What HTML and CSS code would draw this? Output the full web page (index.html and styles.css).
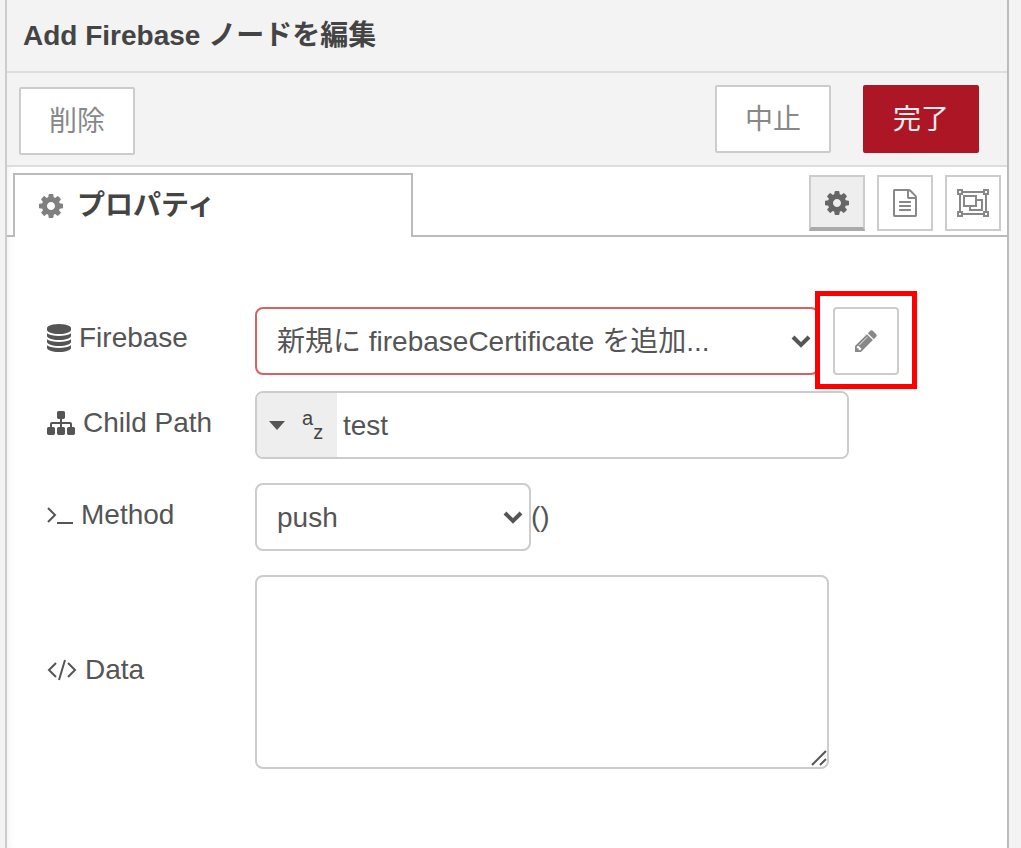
FILE: index.html
```html
<!DOCTYPE html>
<html lang="ja">

<head>
    <meta charset="utf-8">
    <title>Add Firebase ノードを編集</title>
    <link rel="stylesheet" href="styles.css">
</head>

<body>
    <!-- Shared icons -->
    <svg class="icon-defs" aria-hidden="true">
        <symbol id="icon-cog" viewBox="0 128 1536 1536">
            <path d="M1024 896q0-106-75-181t-181-75-181 75-75 181 75 181 181 75 181-75 75-181zm512-109v222q0 12-8 23t-20 13l-185 28q-19 54-39 91 35 50 107 138 10 12 10 25t-9 23q-27 37-99 108t-94 71q-12 0-26-9l-138-108q-44 23-91 38-16 136-29 186-7 28-36 28h-222q-14 0-24.500-8.500t-11.500-21.500l-28-184q-49-16-90-37l-141 107q-10 9-25 9-14 0-25-11-126-114-165-168-7-10-7-23 0-12 8-23 15-21 51-66.500t54-70.500q-27-50-41-99l-183-27q-13-2-21-12.500t-8-23.500v-222q0-12 8-23t19-13l186-28q14-46 39-92-40-57-107-138-10-12-10-24 0-10 9-23 26-36 98.500-107.500t94.500-71.500q13 0 26 10l138 107q44-23 91-38 16-136 29-186 7-28 36-28h222q14 0 24.500 8.500t11.500 21.500l28 184q49 16 90 37l142-107q9-9 24-9 13 0 25 10 129 119 165 170 7 8 7 22 0 12-8 23-15 21-51 66.500t-54 70.500q26 50 41 98l183 28q13 2 21 12.500t8 23.500z" fill-rule="evenodd" />
        </symbol>
        <symbol id="icon-chevron" viewBox="0 0 20 14">
            <path d="M2 3l8 8 8-8" fill="none" stroke="currentColor" stroke-width="4" />
        </symbol>
    </svg>

    <div class="tray">
        <header class="tray-header">
            <h1>Add Firebase ノードを編集</h1>
        </header>

        <!-- Delete / cancel / done -->
        <div class="tray-toolbar">
            <button type="button" class="btn btn-delete">削除</button>
            <button type="button" class="btn btn-cancel">中止</button>
            <button type="button" class="btn btn-primary">完了</button>
        </div>

        <!-- Tabs -->
        <div class="tabs">
            <a class="tab" href="#properties">
                <svg class="icon-24"><use href="#icon-cog" /></svg>
                <span>プロパティ</span>
            </a>
            <div class="tab-buttons">
                <button type="button" class="tab-button active" aria-label="プロパティ">
                    <svg class="icon-24"><use href="#icon-cog" /></svg>
                </button>
                <button type="button" class="tab-button" aria-label="説明">
                    <svg class="icon-file" viewBox="128 0 1536 1792">
                        <path d="M1596 380q28 28 48 76t20 88v1152q0 40-28 68t-68 28h-1344q-40 0-68-28t-28-68v-1600q0-40 28-68t68-28h896q40 0 88 20t76 48zm-444-244v376h376q-10-29-22-41l-313-313q-12-12-41-22zm384 1528v-1024h-416q-40 0-68-28t-28-68v-416h-768v1536h1280zm-1024-864q0-14 9-23t23-9h704q14 0 23 9t9 23v64q0 14-9 23t-23 9h-704q-14 0-23-9t-9-23v-64zm736 224q14 0 23 9t9 23v64q0 14-9 23t-23 9h-704q-14 0-23-9t-9-23v-64q0-14 9-23t23-9h704zm0 256q14 0 23 9t9 23v64q0 14-9 23t-23 9h-704q-14 0-23-9t-9-23v-64q0-14 9-23t23-9h704z" />
                    </svg>
                </button>
                <button type="button" class="tab-button" aria-label="外観">
                    <svg class="icon-group" viewBox="0 0 32 28">
                        <g fill="none" stroke="currentColor" stroke-width="2">
                            <path d="M6 3h20M6 25h20M3 6v16M29 6v16" />
                            <path d="M1 1h4v4h-4zM27 1h4v4h-4zM1 23h4v4h-4zM27 23h4v4h-4z" />
                            <path d="M7 7h12v10h-12z" />
                            <path d="M19 11h6v10h-12v-4" />
                        </g>
                    </svg>
                </button>
            </div>
        </div>

        <!-- Node properties form -->
        <form class="node-form">
            <div class="form-row row-firebase">
                <label for="firebase">
                    <svg class="icon-database" viewBox="128 0 1536 1792">
                        <path d="M896 768q237 0 443-43t325-127v170q0 69-103 128t-280 93.500-385 34.500-385-34.500-280-93.500-103-128v-170q119 84 325 127t443 43zm0 768q237 0 443-43t325-127v170q0 69-103 128t-280 93.500-385 34.500-385-34.500-280-93.500-103-128v-170q119 84 325 127t443 43zm0-384q237 0 443-43t325-127v170q0 69-103 128t-280 93.500-385 34.500-385-34.500-280-93.500-103-128v-170q119 84 325 127t443 43zm0-1152q208 0 385 34.500t280 93.500 103 128v128q0 69-103 128t-280 93.500-385 34.500-385-34.500-280-93.500-103-128v-128q0-69 103-128t280-93.500 385-34.500z" />
                    </svg>
                    Firebase
                </label>
                <div class="select-wrap select-firebase">
                    <select id="firebase" class="input-error">
                        <option>新規に firebaseCertificate を追加...</option>
                    </select>
                    <svg class="chevron"><use href="#icon-chevron" /></svg>
                </div>
                <div class="highlight">
                    <button type="button" class="btn-edit" aria-label="編集">
                        <svg class="icon-pencil" viewBox="128 128 1536 1536">
                            <path d="M491 1536l91-91-235-235-91 91v107h128v128h107zm523-928q0-22-22-22-10 0-17 7l-542 542q-7 7-7 17 0 22 22 22 10 0 17-7l542-542q7-7 7-17zm-54-192l416 416-832 832h-416v-416zm683 96q0 53-37 90l-166 166-416-416 166-165q36-38 90-38 53 0 91 38l235 234q37 39 37 91z" />
                        </svg>
                    </button>
                </div>
            </div>

            <div class="form-row">
                <label for="child-path">
                    <svg class="icon-sitemap" viewBox="0 128 1792 1536">
                        <path d="M1792 1248v320q0 40-28 68t-68 28h-320q-40 0-68-28t-28-68v-320q0-40 28-68t68-28h96v-192h-512v192h96q40 0 68 28t28 68v320q0 40-28 68t-68 28h-320q-40 0-68-28t-28-68v-320q0-40 28-68t68-28h96v-192h-512v192h96q40 0 68 28t28 68v320q0 40-28 68t-68 28h-320q-40 0-68-28t-28-68v-320q0-40 28-68t68-28h96v-192q0-52 38-90t90-38h512v-192h-96q-40 0-68-28t-28-68v-320q0-40 28-68t68-28h320q40 0 68 28t28 68v320q0 40-28 68t-68 28h-96v192h512q52 0 90 38t38 90v192h96q40 0 68 28t28 68z" />
                    </svg>
                    Child Path
                </label>
                <div class="typed-input">
                    <button type="button" class="type-select" aria-label="文字列">
                        <svg class="caret" viewBox="0 0 16 9"><path d="M0 0h16l-8 9z" /></svg>
                        <span class="type-az"><span>a</span><span class="type-z">z</span></span>
                    </button>
                    <input type="text" id="child-path" value="test">
                </div>
            </div>

            <div class="form-row">
                <label for="method">
                    <svg class="icon-terminal" viewBox="0 0 26 20">
                        <path d="M1 3l7 7-7 7M10 18h16" fill="none" stroke="currentColor" stroke-width="2" />
                    </svg>
                    Method
                </label>
                <div class="select-wrap select-method">
                    <select id="method">
                        <option>push</option>
                    </select>
                    <svg class="chevron"><use href="#icon-chevron" /></svg>
                </div>
                <span class="method-args">()</span>
            </div>

            <div class="form-row">
                <label for="data">
                    <svg class="icon-code" viewBox="0 0 30 22">
                        <path d="M9 4l-7 7 7 7M21 4l7 7-7 7M18 1l-6 20" fill="none" stroke="currentColor" stroke-width="2" />
                    </svg>
                    Data
                </label>
                <div class="textarea-wrap">
                    <textarea id="data"></textarea>
                    <svg class="resizer" viewBox="0 0 16 16">
                        <path d="M1 15l14-14M9 15l6-6" fill="none" stroke="currentColor" stroke-width="2" />
                    </svg>
                </div>
            </div>
        </form>
    </div>
</body>

</html>
```

FILE: styles.css
```css
* {
    box-sizing: border-box;
}
body {
    margin: 0;
    padding: 0 12px 0 5px;
    background-color: #f3f3f3;
    color: #555;
    font-family: "Liberation Sans", "Noto Sans CJK JP", sans-serif;
    font-size: 28px;
    line-height: 40px;
}
button,
input,
select,
textarea {
    margin: 0;
    color: inherit;
    font: inherit;
}
svg {
    display: block;
    flex: none;
    fill: currentColor;
}
.icon-defs {
    position: absolute;
    width: 0;
    height: 0;
}
.tray {
    min-height: 100vh;
    border-left: 2px solid #ccc;
    border-right: 2px solid #bbb;
    background-color: #fff;
    box-shadow: inset 6px 0 8px -6px rgba(0, 0, 0, 0.08);
}

/* Header and toolbar */
.tray-header {
    padding: 16px 16px 15px;
    border-bottom: 2px solid #ddd;
    background-color: #f3f3f3;
}
.tray-header h1 {
    margin: 0;
    color: #444;
    font-size: 28px;
    font-weight: bold;
}
.tray-toolbar {
    display: flex;
    align-items: flex-start;
    padding: 12px 28px 10px 12px;
    border-bottom: 2px solid #ddd;
    background-color: #f3f3f3;
}
.btn {
    width: 116px;
    height: 68px;
    padding: 2px 0 0;
    border: 2px solid #ccc;
    border-radius: 2px;
    background-color: #fff;
    color: #888;
}
.btn-delete {
    margin-top: 2px;
}
.btn-cancel {
    margin-left: auto;
}
.btn-primary {
    margin-left: 32px;
    border-color: #ad1625;
    background-color: #ad1625;
    color: #eee;
}

/* Tabs */
.tabs {
    display: flex;
    justify-content: space-between;
    height: 70px;
    padding: 6px 6px 0;
    border-bottom: 2px solid #bbb;
}
.tab {
    display: flex;
    align-items: center;
    gap: 14px;
    width: 400px;
    height: 64px;
    padding: 0 24px;
    border: 2px solid #bbb;
    border-bottom: 0;
    background-color: #fff;
    color: #444;
    font-weight: bold;
    text-decoration: none;
}
.tab svg {
    color: #808080;
}
.tab-buttons {
    display: flex;
    gap: 12px;
    padding-top: 2px;
}
.tab-button {
    display: flex;
    align-items: center;
    justify-content: center;
    width: 56px;
    height: 56px;
    padding: 0;
    border: 2px solid #ccc;
    background-color: #fff;
    color: #888;
}
.tab-button.active {
    padding-top: 2px;
    border-bottom: 4px solid #aaa;
    background-color: #eee;
    color: #666;
}

/* Form */
.node-form {
    padding: 70px 40px 40px;
}
.form-row {
    display: flex;
    align-items: center;
    margin-bottom: 24px;
}
.form-row label {
    display: flex;
    flex: none;
    align-items: center;
    gap: 8px;
    width: 208px;
    padding-bottom: 4px;
}
.row-firebase {
    margin-bottom: 16px;
}
.row-firebase label {
    padding-bottom: 6px;
}
.select-wrap {
    position: relative;
}
.select-firebase {
    flex: 0 1 564px;
}
.select-method {
    flex: 0 1 276px;
}
select {
    width: 100%;
    height: 68px;
    padding: 2px 40px 0 20px;
    border: 2px solid #ccc;
    border-radius: 8px;
    background-color: #fff;
    appearance: none;
}
select.input-error {
    border-color: #d6615f;
}
.chevron {
    position: absolute;
    top: 27px;
    right: 8px;
    width: 20px;
    height: 14px;
    pointer-events: none;
}

/* Red frame around the edit button */
.highlight {
    position: relative;
    margin-left: 14px;
}
.highlight::before {
    content: "";
    position: absolute;
    inset: -16px -18px -14px;
    border: 5px solid #f00;
    pointer-events: none;
}
.btn-edit {
    display: flex;
    align-items: center;
    justify-content: center;
    width: 66px;
    height: 68px;
    padding: 0;
    border: 2px solid #ccc;
    border-radius: 4px;
    background-color: #fff;
    color: #888;
}

.typed-input {
    display: flex;
    flex: 0 1 594px;
    height: 68px;
    border: 2px solid #ccc;
    border-radius: 8px;
    overflow: hidden;
}
.type-select {
    display: flex;
    flex: none;
    align-items: center;
    gap: 17px;
    width: 80px;
    padding: 0 12px;
    border: 0;
    background-color: #eee;
}
.type-az {
    display: flex;
    color: #444;
    font-size: 20px;
    line-height: 24px;
}
.type-z {
    margin-top: 14px;
}
.typed-input input {
    flex: 1;
    min-width: 0;
    padding: 2px 6px 0;
    border: 0;
    background-color: #fff;
}
.textarea-wrap {
    position: relative;
    flex: 0 1 574px;
}
textarea {
    display: block;
    width: 100%;
    height: 194px;
    padding: 8px 12px;
    border: 2px solid #ccc;
    border-radius: 8px;
    background-color: #fff;
    resize: none;
}
.resizer {
    position: absolute;
    right: 2px;
    bottom: 3px;
    width: 16px;
    height: 16px;
    pointer-events: none;
}

/* Icon sizes */
.icon-24 {
    width: 24px;
    height: 24px;
}
.icon-pencil {
    width: 22px;
    height: 22px;
}
.icon-file,
.icon-database {
    width: 24px;
    height: 28px;
}
.icon-group {
    width: 32px;
    height: 28px;
}
.icon-sitemap {
    width: 28px;
    height: 24px;
}
.icon-terminal {
    width: 26px;
    height: 20px;
}
.icon-code {
    width: 30px;
    height: 22px;
}
.caret {
    width: 16px;
    height: 9px;
}
```
